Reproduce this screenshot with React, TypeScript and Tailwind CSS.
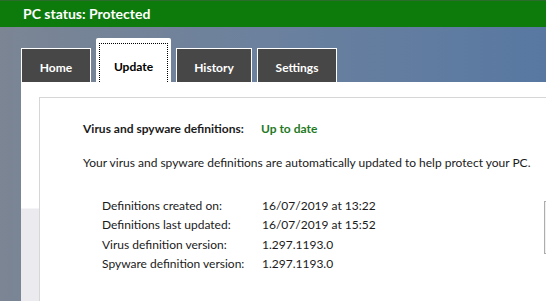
const rows = [
  { label: 'Definitions created on:', value: '16/07/2019 at 13:22' },
  { label: 'Definitions last updated:', value: '16/07/2019 at 15:52' },
  { label: 'Virus definition version:', value: '1.297.1193.0' },
  { label: 'Spyware definition version:', value: '1.297.1193.0' },
]

const tabs = ['Home', 'Update', 'History', 'Settings']

export default function App() {
  return (
    <div
      className="w-[546px] h-[301px] overflow-hidden flex flex-col text-[12px] text-[#1b1b1b]"
      style={{ fontFamily: '"Segoe UI", Lato, sans-serif' }}
    >
      {/* status bar */}
      <div className="h-[27px] shrink-0 bg-[#0c7b0c] border-t border-[#2b6b2b] flex items-center pl-[23px]">
        <span className="text-white font-bold text-[14px] leading-none">PC status: Protected</span>
      </div>

      <div className="flex-1 flex flex-col pl-[21px] bg-[linear-gradient(to_right,#7b8594,#6b819e_50%,#5878a2)]">
        {/* tabs */}
        <div className="h-[55px] flex items-end gap-[5px]">
          {tabs.map((t) =>
            t === 'Update' ? (
              <div key={t} className="w-[75px] h-[44px] bg-white rounded-t-[2px] px-[3px] pt-[5px]">
                <div className="h-full border border-b-0 border-dotted border-black flex items-center justify-center pt-[7px] font-bold text-[12px] text-black">
                  {t}
                </div>
              </div>
            ) : (
              <div
                key={t}
                className={`${t === 'Settings' ? 'w-[80px]' : t === 'History' ? 'w-[76px]' : 'w-[70px]'} h-[34px] bg-[#474747] border border-b-0 border-white flex items-center justify-center pt-[4px] font-bold text-white`}
              >
                {t}
              </div>
            )
          )}
        </div>

        {/* content panel */}
        <div className="flex-1 pt-[15px] pl-[18px] bg-[linear-gradient(to_bottom,#ffffff_0,#ffffff_126px,#ebebef_127px)]">
          <div className="w-[700px] h-full bg-white border-t border-l border-[#d6d6d6] pl-[43px] pt-[22px]">
            <div className="flex font-bold whitespace-nowrap h-[17px] items-center">
              <span className="w-[178px]">Virus and spyware definitions:</span>
              <span className="text-[#1f7a1f]">Up to date</span>
            </div>
            <p className="mt-[17px] h-[17px] leading-[17px] whitespace-nowrap">
              Your virus and spyware definitions are automatically updated to help protect your PC.
            </p>
            <div className="flex mt-[25px] pl-[19px]">
              <div className="w-[442px] flex flex-col">
                {rows.map((r) => (
                  <div key={r.label} className="flex h-[19.5px] items-center whitespace-nowrap">
                    <span className="w-[160px]">{r.label}</span>
                    <span>{r.value}</span>
                  </div>
                ))}
              </div>
              <div className="w-[80px] h-[53px] mt-[5px] border border-[#adadad] bg-[#f0f0f0]" />
            </div>
          </div>
        </div>
      </div>
    </div>
  )
}
